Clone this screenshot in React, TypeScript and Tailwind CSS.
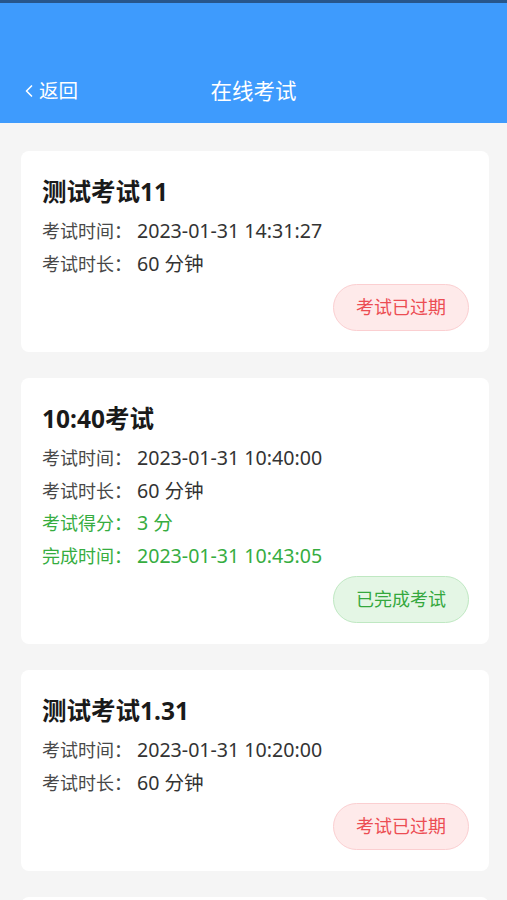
import { ChevronLeft } from "lucide-react";

type Exam = {
  title: string;
  time: string;
  duration: string;
  score?: string;
  finishedAt?: string;
  done: boolean;
};

const EXAMS: Exam[] = [
  { title: "测试考试11", time: "2023-01-31 14:31:27", duration: "60 分钟", done: false },
  {
    title: "10:40考试",
    time: "2023-01-31 10:40:00",
    duration: "60 分钟",
    score: "3 分",
    finishedAt: "2023-01-31 10:43:05",
    done: true,
  },
  { title: "测试考试1.31", time: "2023-01-31 10:20:00", duration: "60 分钟", done: false },
];

function Row({ label, value, green }: { label: string; value: string; green?: boolean }) {
  return (
    <div
      className={`flex text-[18px] leading-[32.5px] ${green ? "text-[#36ad3f]" : "text-[#333]"}`}
    >
      <span className={green ? "" : "text-[#484848]"}>{label}：</span>
      <span className="ml-[5px] text-[19.6px]">{value}</span>
    </div>
  );
}

function ExamCard({ exam }: { exam: Exam }) {
  return (
    <div className="bg-white rounded-[8px] pt-[24px] pb-[21px] pl-[21px] pr-[20px]">
      <div className="text-[24.5px] leading-[34px] font-bold text-[#1a1a1a] mb-[6px]">
        {exam.title}
      </div>
      <Row label="考试时间" value={exam.time} />
      <Row label="考试时长" value={exam.duration} />
      {exam.score && <Row label="考试得分" value={exam.score} green />}
      {exam.finishedAt && <Row label="完成时间" value={exam.finishedAt} green />}
      <div className="flex justify-end mt-[4px]">
        {exam.done ? (
          <span className="h-[47px] w-[136px] flex items-center justify-center rounded-full border border-[#bfe8c2] bg-[#e4f6e5] text-[18px] text-[#34a83d]">
            已完成考试
          </span>
        ) : (
          <span className="h-[47px] w-[136px] flex items-center justify-center rounded-full border border-[#fbcfd1] bg-[#feeaea] text-[18px] text-[#ec4d53]">
            考试已过期
          </span>
        )}
      </div>
    </div>
  );
}

export default function App() {
  return (
    <div
      className="w-[507px] h-[900px] overflow-hidden bg-[#f5f5f5]"
      style={{ fontFamily: '"Noto Sans", "Noto Sans CJK SC", sans-serif' }}
    >
      <div className="h-[3px] bg-[#27568c]" />
      <div className="h-[120px] bg-[#3e9bfd] flex items-end pb-[19px] relative text-white">
        <div className="flex items-center pl-[19px] text-[19.5px] leading-[26px]">
          <ChevronLeft size={20} strokeWidth={2} />
          <span>返回</span>
        </div>
        <div className="absolute left-0 right-0 bottom-[19px] text-center text-[21.5px] leading-[26px]">
          在线考试
        </div>
      </div>
      <div className="flex flex-col gap-[26px] pl-[21px] pt-[28px] pr-[18px]">
        {EXAMS.map((e) => (
          <ExamCard key={e.title} exam={e} />
        ))}
        <div className="h-[40px] bg-white rounded-t-[8px]" />
      </div>
    </div>
  );
}
